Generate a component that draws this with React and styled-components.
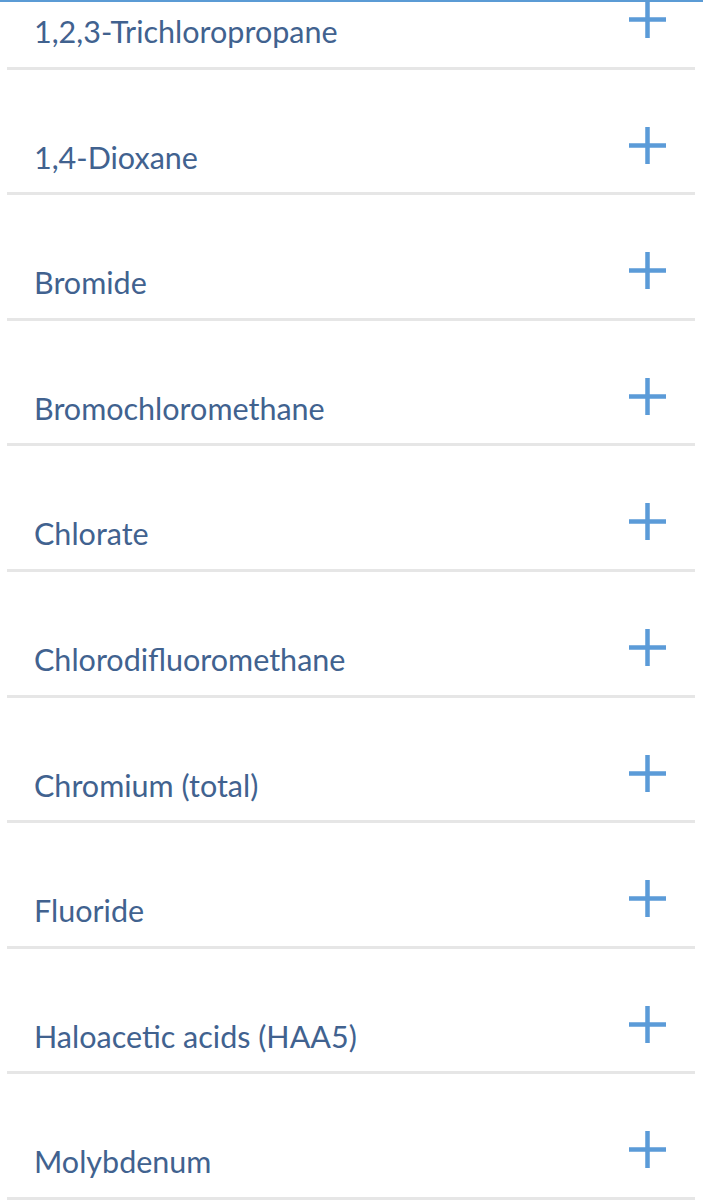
import React from "react";
import styled, { createGlobalStyle } from "styled-components";

const Global = createGlobalStyle`
  html, body { margin: 0; padding: 0; background: #ffffff; }
  body { font-family: Lato, "Open Sans", sans-serif; }
`;

const Page = styled.div`
  width: 703px;
  height: 1200px;
  overflow: hidden;
  background: #ffffff;
  border-top: 2px solid #5b9bd5;
  box-sizing: border-box;
`;

const List = styled.ul`
  list-style: none;
  margin: -58px 0 0 0;
  padding: 0;
`;

const Item = styled.li`
  box-sizing: border-box;
  height: 125.6px;
  margin: 0 8px 0 7px;
  padding: 0 29px 0 27px;
  border-bottom: 3px solid #e6e6e6;
  display: flex;
  justify-content: space-between;
  align-items: flex-start;
`;

const Title = styled.span`
  margin-top: 69px;
  font-family: Lato, sans-serif;
  font-size: 30.5px;
  line-height: 37px;
  color: #41628f;
`;

const PlusIcon = styled.svg`
  margin-top: 57px;
  width: 37px;
  height: 37px;
  flex: none;
`;

const items = [
  "1,2,3-Trichloropropane",
  "1,4-Dioxane",
  "Bromide",
  "Bromochloromethane",
  "Chlorate",
  "Chlorodifluoromethane",
  "Chromium (total)",
  "Fluoride",
  "Haloacetic acids (HAA5)",
  "Molybdenum",
];

function Plus() {
  return (
    <PlusIcon viewBox="0 0 37 37">
      <path d="M18.5 0V37M0 18.5H37" stroke="#5b9bd8" strokeWidth="4.5" fill="none" />
    </PlusIcon>
  );
}

export default function App() {
  return (
    <Page>
      <Global />
      <List>
        {items.map((t) => (
          <Item key={t}>
            <Title>{t}</Title>
            <Plus />
          </Item>
        ))}
      </List>
    </Page>
  );
}
